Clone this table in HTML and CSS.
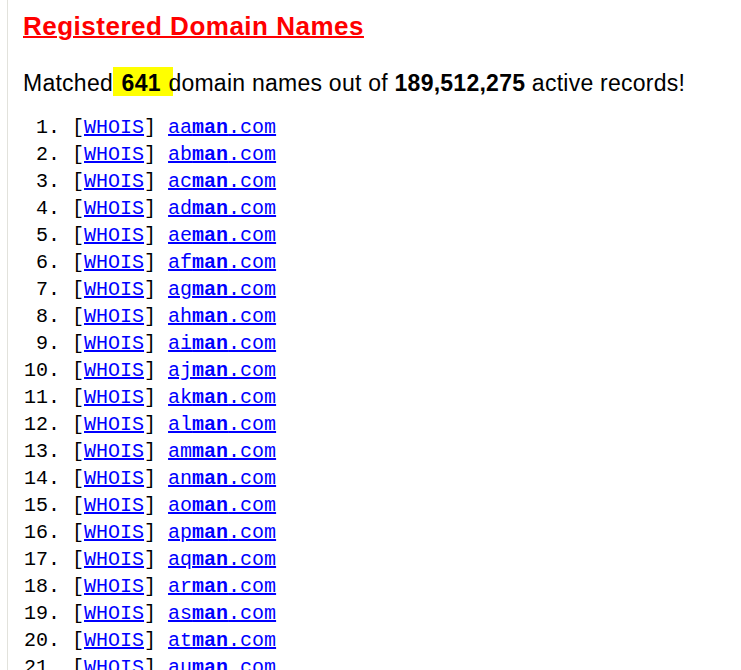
FILE: index.html
```html
<!DOCTYPE html>
<html>
<head>
<meta charset="utf-8">
<title>Registered Domain Names</title>
<link rel="stylesheet" href="styles.css">
</head>
<body>
<div class="page">
  <h1 class="title">Registered Domain Names</h1>
  <p class="summary">Matched<span class="hl"> 641 </span>domain names out of <b>189,512,275</b> active records!</p>
  <ol class="domains">
    <li>[<a href="#">WHOIS</a>] <a href="#">aa<b>man</b>.com</a></li>
    <li>[<a href="#">WHOIS</a>] <a href="#">ab<b>man</b>.com</a></li>
    <li>[<a href="#">WHOIS</a>] <a href="#">ac<b>man</b>.com</a></li>
    <li>[<a href="#">WHOIS</a>] <a href="#">ad<b>man</b>.com</a></li>
    <li>[<a href="#">WHOIS</a>] <a href="#">ae<b>man</b>.com</a></li>
    <li>[<a href="#">WHOIS</a>] <a href="#">af<b>man</b>.com</a></li>
    <li>[<a href="#">WHOIS</a>] <a href="#">ag<b>man</b>.com</a></li>
    <li>[<a href="#">WHOIS</a>] <a href="#">ah<b>man</b>.com</a></li>
    <li>[<a href="#">WHOIS</a>] <a href="#">ai<b>man</b>.com</a></li>
    <li>[<a href="#">WHOIS</a>] <a href="#">aj<b>man</b>.com</a></li>
    <li>[<a href="#">WHOIS</a>] <a href="#">ak<b>man</b>.com</a></li>
    <li>[<a href="#">WHOIS</a>] <a href="#">al<b>man</b>.com</a></li>
    <li>[<a href="#">WHOIS</a>] <a href="#">am<b>man</b>.com</a></li>
    <li>[<a href="#">WHOIS</a>] <a href="#">an<b>man</b>.com</a></li>
    <li>[<a href="#">WHOIS</a>] <a href="#">ao<b>man</b>.com</a></li>
    <li>[<a href="#">WHOIS</a>] <a href="#">ap<b>man</b>.com</a></li>
    <li>[<a href="#">WHOIS</a>] <a href="#">aq<b>man</b>.com</a></li>
    <li>[<a href="#">WHOIS</a>] <a href="#">ar<b>man</b>.com</a></li>
    <li>[<a href="#">WHOIS</a>] <a href="#">as<b>man</b>.com</a></li>
    <li>[<a href="#">WHOIS</a>] <a href="#">at<b>man</b>.com</a></li>
    <li>[<a href="#">WHOIS</a>] <a href="#">au<b>man</b>.com</a></li>
  </ol>
</div>
</body>
</html>
```
FILE: styles.css
```css
html, body {
  margin: 0;
  padding: 0;
  background: #ffffff;
}
body {
  font-family: "Liberation Sans", Arial, sans-serif;
  color: #000000;
  height: 670px;
  overflow: hidden;
}
.page {
  margin-left: 7px;
  border-left: 1px solid #e2e2dc;
  padding-left: 15px;
  height: 670px;
  overflow: hidden;
}
.title {
  margin: 0;
  padding-top: 11px;
  font-size: 26px;
  line-height: 30px;
  letter-spacing: 0.5px;
  font-weight: bold;
  color: #ff0000;
  text-decoration: underline;
  text-decoration-thickness: 2px;
}
.summary {
  margin: 28px 0 0 0;
  font-size: 23px;
  line-height: 28px;
  letter-spacing: 0.25px;
}
.summary .hl {
  background: #ffff00;
  font-weight: bold;
  padding: 3px 6px 0 2px;
  margin-right: -5px;
}
.domains {
  margin: 17px 0 0 0;
  padding-left: 49px;
  font-family: "Liberation Mono", "Courier New", monospace;
  font-size: 20px;
  line-height: 27px;
}
.domains li::marker {
  font-family: "Liberation Mono", "Courier New", monospace;
}
.domains a {
  color: #0000ff;
  text-decoration: underline;
  text-decoration-thickness: 2px;
}
.domains a b {
  font-weight: bold;
}
```
